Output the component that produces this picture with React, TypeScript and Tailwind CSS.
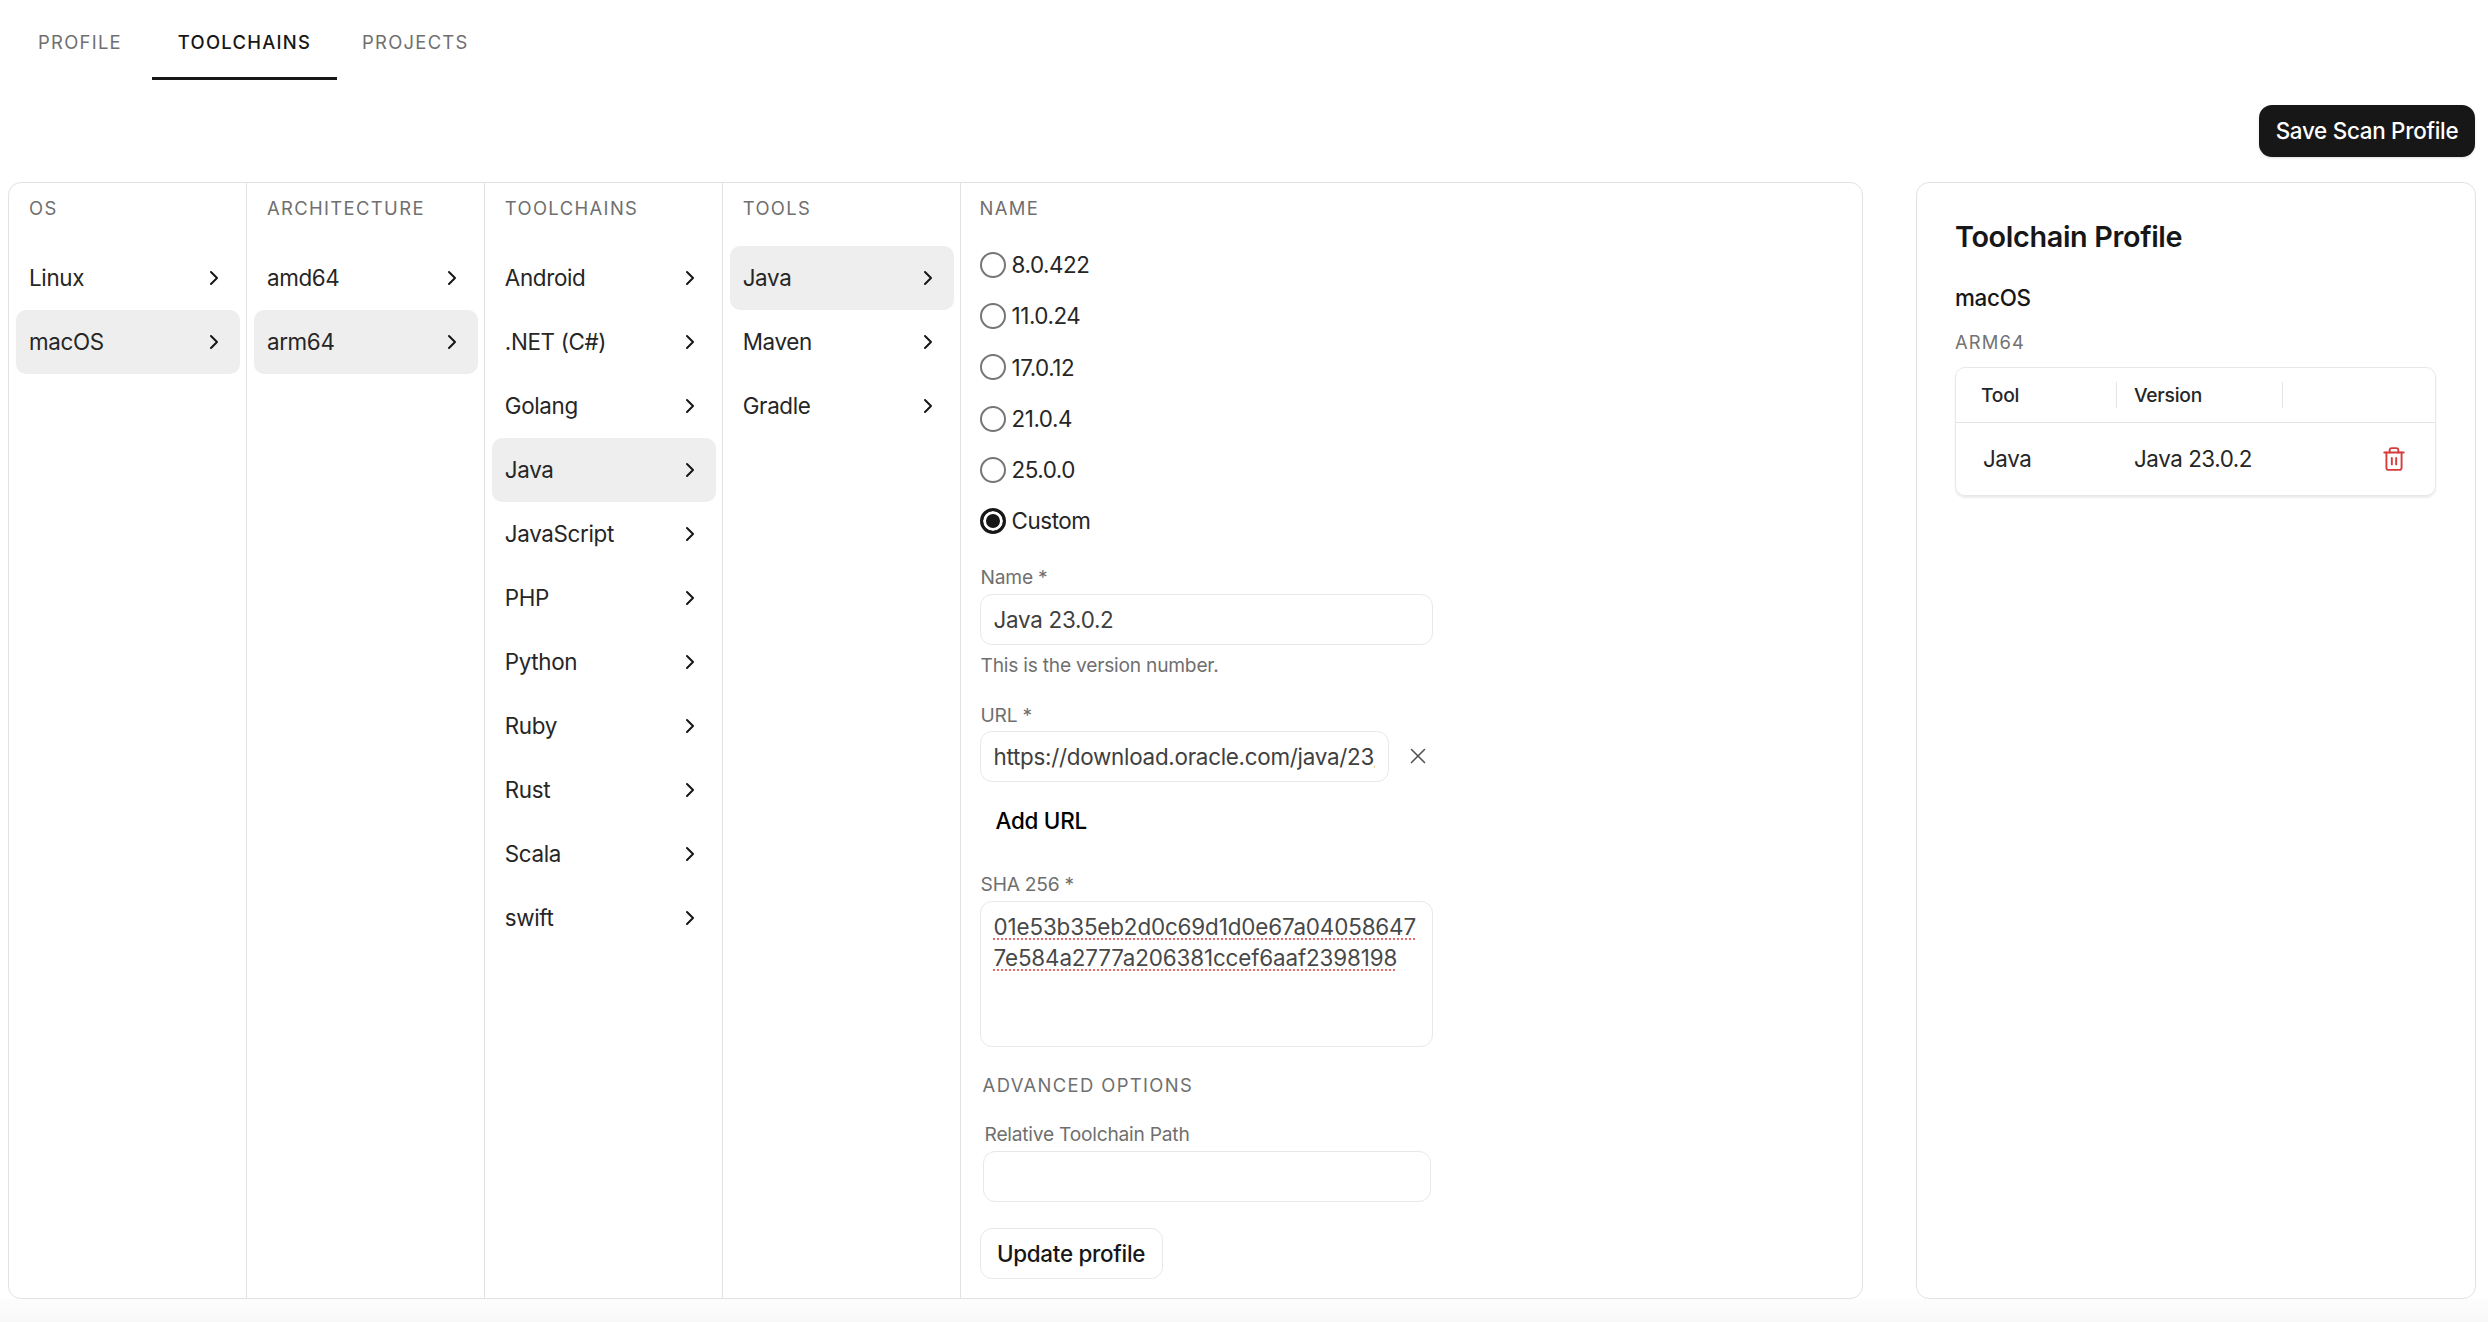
import React from 'react';
import { ChevronRight, Trash2, X } from 'lucide-react';

type Column = { title: string; items: string[]; active?: string };

const columns: Column[] = [
    { title: 'OS', items: ['Linux', 'macOS'], active: 'macOS' },
    { title: 'ARCHITECTURE', items: ['amd64', 'arm64'], active: 'arm64' },
    {
        title: 'TOOLCHAINS',
        items: ['Android', '.NET (C#)', 'Golang', 'Java', 'JavaScript', 'PHP', 'Python', 'Ruby', 'Rust', 'Scala', 'swift'],
        active: 'Java',
    },
    { title: 'TOOLS', items: ['Java', 'Maven', 'Gradle'], active: 'Java' },
];

const versions = ['8.0.422', '11.0.24', '17.0.12', '21.0.4', '25.0.0', 'Custom'];

const Heading: React.FC<{ children: React.ReactNode }> = ({ children }) => (
    <div className="h-[52px] flex items-center text-[18.4px] font-normal tracking-[0.075em] text-[#6f6f6f]">{children}</div>
);

const Label: React.FC<{ children: React.ReactNode; className?: string }> = ({ children, className }) => (
    <div className={`h-[24px] flex items-center text-[19.2px] font-normal tracking-[-0.012em] text-[#6f6f6f] ${className ?? ''}`}>{children}</div>
);

const inputClass = 'h-[51px] rounded-[12px] border border-[#e8e8e8] bg-white px-[13px] text-[22.4px] tracking-[-0.012em] text-[#404040] outline-none';

export default function App() {
    return (
        <div className="w-[2488px] h-[1322px] flex flex-col overflow-hidden bg-white text-[#171717] [font-family:Inter,sans-serif]">
            <nav className="h-[80px] flex pl-[12px] text-[18.4px] tracking-[0.07em] uppercase">
                <div className="h-[80px] w-[140px] pl-[26px] pt-[29px] text-[#6f6f6f]">Profile</div>
                <div className="h-[80px] w-[185px] pt-[29px] text-center font-medium border-b-[3px] border-[#171717] text-[#171717]">Toolchains</div>
                <div className="h-[80px] pl-[25px] pt-[29px] text-[#6f6f6f]">Projects</div>
            </nav>

            <div className="flex justify-end pr-[13px] pt-[25px]">
                <button className="h-[52px] w-[216px] rounded-[13px] bg-[#171717] text-[22.4px] font-medium tracking-[-0.012em] text-white shadow-sm">
                    Save Scan Profile
                </button>
            </div>

            <div className="flex pl-[8px] pt-[25px]">
                <section className="w-[1855px] h-[1117px] flex rounded-[13px] border border-[#e2e2e2] overflow-hidden">
                    {columns.map(col => (
                        <div key={col.title} className="w-[237.9px] border-r border-[#e2e2e2] pl-[7px] pr-[6px]">
                            <div className="pl-[13px] mb-[11px]">
                                <Heading>{col.title}</Heading>
                            </div>
                            {col.items.map(item => (
                                <div
                                    key={item}
                                    className={`h-[64px] flex items-center justify-between pl-[13px] pr-[14px] rounded-[10px] text-[22.4px] tracking-[-0.015em] text-[#262626] ${col.active === item ? 'bg-[#eeeeee]' : ''}`}
                                >
                                    <span>{item}</span>
                                    <ChevronRight size={24} strokeWidth={2} className="text-[#171717]" />
                                </div>
                            ))}
                        </div>
                    ))}

                    <div className="flex-1 pl-[19px]">
                        <Heading>NAME</Heading>
                        <div className="mt-[17px] flex flex-col gap-[25.2px]">
                            {versions.map(v => (
                                <label key={v} className="h-[26px] flex items-center gap-[6px] text-[22.4px] tracking-[-0.02em] text-[#262626]">
                                    <input
                                        type="radio"
                                        name="version"
                                        readOnly
                                        checked={v === 'Custom'}
                                        className="w-[26px] h-[26px] m-0 appearance-none rounded-full border-2 border-[#767676] bg-white checked:border-[3px] checked:border-[#171717] checked:bg-[#171717] checked:shadow-[inset_0_0_0_3px_white]"
                                    />
                                    {v}
                                </label>
                            ))}
                        </div>

                        <Label className="mt-[31px] mb-[5px] pl-[1px]">Name *</Label>
                        <input readOnly value="Java 23.0.2" className={`${inputClass} block w-[453px]`} />
                        <Label className="mt-[8px] pl-[1px]">This is the version number.</Label>

                        <Label className="mt-[26px] mb-[4px] pl-[1px]">URL *</Label>
                        <div className="flex items-center">
                            <input readOnly value="https://download.oracle.com/java/23/archive/jdk-23.0.2_macos-aarch64_bin.tar.gz" className={`${inputClass} block w-[409px]`} />
                            <X size={26} strokeWidth={1.5} className="ml-[16px] text-[#525252]" />
                        </div>
                        <button className="mt-[13px] h-[51px] pl-[16px] block text-[22.4px] font-medium tracking-[-0.012em] text-black">Add URL</button>

                        <Label className="mt-[26px] mb-[5px] pl-[1px]">SHA 256 *</Label>
                        <div className="w-[453px] h-[146px] rounded-[12px] border border-[#e8e8e8] pl-[13px] pt-[9px] text-[22.4px] leading-[31px] tracking-[-0.006em] text-[#484848] whitespace-nowrap">
                            {['01e53b35eb2d0c69d1d0e67a04058647', '7e584a2777a206381ccef6aaf2398198'].map(line => (
                                <div key={line}>
                                    <span className="underline decoration-dotted decoration-[#e86a6a] decoration-[2px] underline-offset-[4px]">{line}</span>
                                </div>
                            ))}
                        </div>

                        <div className="mt-[27px] h-[24px] pl-[3px] flex items-center text-[18.4px] font-normal tracking-[0.075em] text-[#6f6f6f]">
                            ADVANCED OPTIONS
                        </div>
                        <Label className="mt-[24px] mb-[5px] pl-[5px]">Relative Toolchain Path</Label>
                        <input readOnly value="" className={`${inputClass} block w-[448px] ml-[3px]`} />
                        <button className="mt-[26px] h-[51px] w-[183px] block rounded-[12px] border border-[#e8e8e8] text-[22.4px] font-medium tracking-[-0.012em] text-[#171717]">
                            Update profile
                        </button>
                    </div>
                </section>

                <aside className="ml-[53px] w-[560px] h-[1117px] rounded-[13px] border border-[#e2e2e2] pl-[38px] pt-[36px]">
                    <h2 className="h-[36px] flex items-center text-[28.8px] font-semibold tracking-[-0.012em] text-[#171717]">Toolchain Profile</h2>
                    <div className="mt-[29px] h-[28px] flex items-center text-[22.4px] font-medium tracking-[-0.012em] text-[#171717]">macOS</div>
                    <div className="mt-[19px] h-[24px] flex items-center text-[18.4px] font-normal tracking-[0.06em] text-[#737373]">ARM64</div>
                    <div className="mt-[12px] w-[481px] h-[129px] rounded-[10px] border border-[#e8e8e8] shadow-[0_2px_2px_rgba(0,0,0,0.08)]">
                        <div className="h-[55px] flex items-center border-b border-[#e5e5e5] text-[19.2px] font-medium tracking-[-0.012em] text-[#262626]">
                            <div className="w-[161px] h-[26px] pl-[25px] flex items-center border-r border-[#e5e5e5]">Tool</div>
                            <div className="w-[166px] h-[26px] pl-[17px] flex items-center border-r border-[#e5e5e5]">Version</div>
                        </div>
                        <div className="h-[72px] flex items-center text-[22.4px] tracking-[-0.02em] text-[#262626]">
                            <div className="w-[161px] pl-[27px]">Java</div>
                            <div className="w-[166px] pl-[17px]">Java 23.0.2</div>
                            <Trash2 size={26} strokeWidth={1.75} className="ml-[98px] text-[#d63c3c]" />
                        </div>
                    </div>
                </aside>
            </div>

            <div className="flex-1 bg-gradient-to-b from-[#fdfdfd] to-[#f8f8f8]" />
        </div>
    );
}
